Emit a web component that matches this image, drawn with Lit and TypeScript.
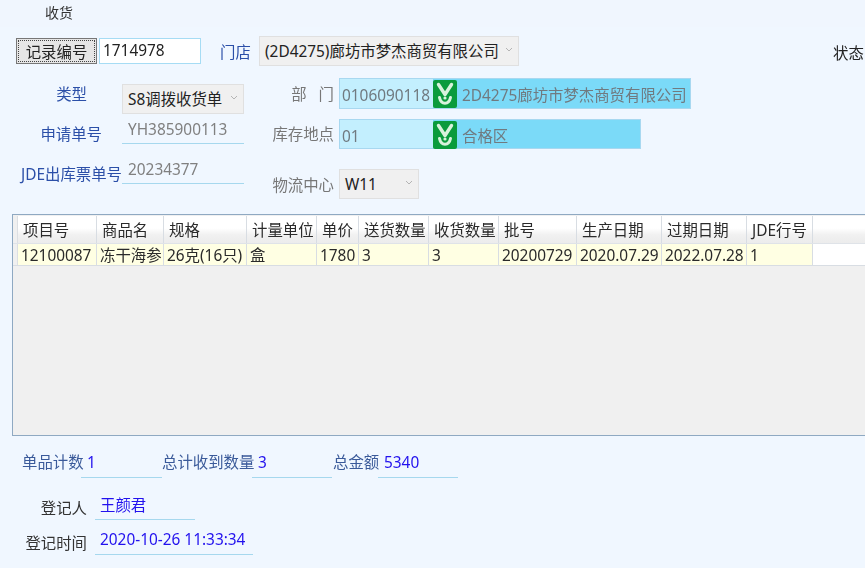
import { LitElement, html, css, svg } from "lit";
import { customElement } from "lit/decorators.js";

const columns = [
  { head: "项目号", cell: "12100087", w: 79 },
  { head: "商品名", cell: "冻干海参", w: 67 },
  { head: "规格", cell: "26克(16只)", w: 83 },
  { head: "计量单位", cell: "盒", w: 70 },
  { head: "单价", cell: "1780", w: 42 },
  { head: "送货数量", cell: "3", w: 70 },
  { head: "收货数量", cell: "3", w: 70 },
  { head: "批号", cell: "20200729", w: 78 },
  { head: "生产日期", cell: "2020.07.29", w: 85 },
  { head: "过期日期", cell: "2022.07.28", w: 85 },
  { head: "JDE行号", cell: "1", w: 66 },
];

const chevron = svg`<svg class="ico" viewBox="0 0 24 28" width="24" height="28">
  <rect x="0" y="0" width="24" height="28" rx="2" fill="#0a9b3c"/>
  <path d="M5.5 4.5 L12 14.5 L18.5 4.5" fill="none" stroke="#d8f2dc" stroke-width="3.4" stroke-linecap="round" stroke-linejoin="round"/>
  <path d="M6.5 17.5 C8 25 16 25 17.5 17.5" fill="none" stroke="#d8f2dc" stroke-width="3" stroke-linecap="round"/>
  <circle cx="12" cy="18" r="1.6" fill="#d8f2dc"/>
</svg>`;

const caret = svg`<svg class="caret" viewBox="0 0 8 5" width="8" height="5"><path d="M1 1 L4 4 L7 1" fill="none" stroke="#b4b4b4" stroke-width="1"/></svg>`;

@customElement("app-root")
export class AppRoot extends LitElement {
  static styles = css`
    :host {
      display: block;
      width: 865px;
      height: 568px;
      overflow: hidden;
      background: #f0f7ff;
      font-family: "Noto Sans", "Noto Sans CJK SC", sans-serif;
      font-size: 15.4px;
      line-height: 20px;
      color: #333;
    }
    .page { filter: blur(0.3px); }
    .title {
      height: 27px;
      padding: 3px 0 0 45px;
      box-sizing: border-box;
      font-size: 14px;
      background: #f0f6fe;
    }
    .top {
      display: flex;
      align-items: center;
      height: 30px;
      margin-top: 9px;
      padding-left: 16px;
    }
    .btn {
      width: 81px;
      height: 26px;
      flex: none;
      box-sizing: border-box;
      background: #e6e6e6;
      border: 1px solid #777;
      outline: 1px dotted #444;
      outline-offset: -3px;
      text-align: center;
      line-height: 27px;
      color: #222;
      white-space: nowrap;
    }
    .input {
      width: 102px;
      height: 26px;
      flex: none;
      margin-left: 2px;
      box-sizing: border-box;
      background: #fff;
      border: 1px solid #a6dcf4;
      padding: 2px 0 0 3px;
      line-height: 20px;
      color: #222;
    }
    .blue { color: #2b4fa8; }
    .gray { color: #777; }
    .store { margin-left: 19px; width: 39px; flex: none; white-space: nowrap; padding-top: 3px; }
    .select {
      position: relative;
      flex: none;
      box-sizing: border-box;
      height: 30px;
      background: #f0f0f0;
      border: 1px solid #e0e0e0;
      line-height: 30px;
      color: #222;
      padding-left: 5px;
      white-space: nowrap;
    }
    .caret { position: absolute; right: 5px; top: 10px; }
    .s-store { width: 260px; }
    .s-type { width: 122px; margin-left: 35px; }
    .s-wl { width: 80px; }
    .state { margin-left: 314px; color: #222; white-space: nowrap; padding-top: 5px; }
    .mid { display: flex; margin-top: 12px; height: 136px; }
    .left { width: 244px; padding-top: 6px; box-sizing: border-box; flex: none; }
    .lrow { display: flex; height: 30px; }
    .lrow.req { height: 40px; margin-top: 6px; }
    .lab {
      box-sizing: border-box;
      width: 122px;
      flex: none;
      white-space: nowrap;
      text-align: right;
    }
    .lab.kind { width: 87px; padding-top: 1px; }
    .lab.reqno { width: 102px; padding-top: 5px; }
    .lab.jde { padding-top: 5px; }
    .uval {
      width: 122px;
      height: 24px;
      flex: none;
      box-sizing: border-box;
      border-bottom: 1px solid #a6d8ee;
      padding-left: 6px;
      line-height: 20px;
      color: #808080;
    }
    .uval.reqno { margin-left: 20px; }
    .right { margin-left: 28px; }
    .rrow { display: flex; height: 31px; }
    .rrow.second { margin-top: 10px; height: 30px; }
    .rrow.third { margin-top: 20px; height: 30px; }
    .rlab { width: 62px; text-align: right; white-space: pre; padding-right: 5px; flex: none; line-height: 33px; }
    .second .rlab { line-height: 32px; }
    .third .rlab { line-height: 34px; }
    .fld {
      display: flex;
      height: 100%;
      box-sizing: border-box;
      border: 1px solid #a8d8f0;
      background: #7bdaf8;
      color: #707a80;
    }
    .fld.dept { width: 352px; }
    .fld.loc { width: 302px; }
    .code {
      background: #c3effe;
      width: 93px;
      flex: none;
      padding-left: 2px;
      box-sizing: border-box;
      line-height: 33px;
      white-space: nowrap;
      overflow: hidden;
    }
    .ico { display: block; flex: none; margin-top: 0.5px; }
    .nm { padding-left: 5px; line-height: 33px; white-space: nowrap; overflow: hidden; }
    .grid {
      margin: 0 0 0 12px;
      height: 222px;
      box-sizing: border-box;
      background: #f0f0f0;
      border: 1px solid #8fa9c2;
      border-right: none;
      padding-top: 1px;
      overflow: hidden;
    }
    .tr { display: flex; }
    .tr.h { height: 27px; background: linear-gradient(#ffffff 0, #ffffff 45%, #f1f1f1 70%, #ececec 100%); }
    .tr.d { height: 23px; box-sizing: border-box; background: #fff; border-top: 1px solid #dfe3e8; border-bottom: 1px solid #d8dde3; }
    .gut { width: 5px; flex: none; background: #f0f0f0; border-right: 1px solid #dcdfe3; box-sizing: border-box; }
    .th, .td { flex: none; box-sizing: border-box; border-right: 1px solid #d8dde3; white-space: nowrap; overflow: hidden; color: #2a2a2a; }
    .th { padding-left: 5px; line-height: 29px; }
    .td { padding-left: 3px; line-height: 24px; background: #ffffe3; }
    .sum { display: flex; margin: 17px 0 0 22px; height: 25px; }
    .sl { color: #3a5a9a; white-space: nowrap; line-height: 20px; flex: none; }
    .sl.a { width: 59px; }
    .sl.b { width: 90px; }
    .sl.c { width: 45px; margin-left: 1px; }
    .sv {
      flex: none;
      box-sizing: border-box;
      border-bottom: 1px solid #a6d8ee;
      color: #2211ee;
      padding-left: 6px;
      height: 25px;
      line-height: 20px;
    }
    .sv.a { width: 81px; }
    .sv.b { width: 80px; }
    .person { margin-top: 14px; }
    .prow { display: flex; height: 35px; }
    .pl { width: 87px; flex: none; text-align: right; color: #333; padding-top: 7px; box-sizing: border-box; white-space: nowrap; }
    .pv {
      margin-left: 8px;
      flex: none;
      box-sizing: border-box;
      height: 28px;
      padding: 3px 0 0 5px;
      border-bottom: 1px solid #a6d8ee;
      color: #2211ee;
      white-space: nowrap;
    }
    .pv.who { width: 100px; padding-top: 4px; }
    .pv.when { width: 158px; }
  `;

  render() {
    return html`
      <div class="page">
      <div class="title">收货</div>
      <div class="top">
        <div class="btn">记录编号</div>
        <div class="input">1714978</div>
        <div class="store blue">门店</div>
        <div class="select s-store">(2D4275)廊坊市梦杰商贸有限公司${caret}</div>
        <div class="state">状态</div>
      </div>
      <div class="mid">
        <div class="left">
          <div class="lrow">
            <div class="lab kind blue">类型</div>
            <div class="select s-type">S8调拨收货单${caret}</div>
          </div>
          <div class="lrow req">
            <div class="lab reqno blue">申请单号</div>
            <div class="uval reqno">YH385900113</div>
          </div>
          <div class="lrow">
            <div class="lab jde blue">JDE出库票单号</div>
            <div class="uval">20234377</div>
          </div>
        </div>
        <div class="right">
          <div class="rrow">
            <div class="rlab gray">部   门</div>
            <div class="fld dept">
              <div class="code">0106090118</div>${chevron}<div class="nm">2D4275廊坊市梦杰商贸有限公司</div>
            </div>
          </div>
          <div class="rrow second">
            <div class="rlab gray">库存地点</div>
            <div class="fld loc">
              <div class="code">01</div>${chevron}<div class="nm">合格区</div>
            </div>
          </div>
          <div class="rrow third">
            <div class="rlab gray">物流中心</div>
            <div class="select s-wl">W11${caret}</div>
          </div>
        </div>
      </div>
      <div class="grid">
        <div class="tr h">
          <div class="gut"></div>
          ${columns.map((c) => html`<div class="th" style="width:${c.w}px">${c.head}</div>`)}
        </div>
        <div class="tr d">
          <div class="gut"></div>
          ${columns.map((c) => html`<div class="td" style="width:${c.w}px">${c.cell}</div>`)}
        </div>
      </div>
      <div class="sum">
        <div class="sl a">单品计数</div>
        <div class="sv a">1</div>
        <div class="sl b">总计收到数量</div>
        <div class="sv b">3</div>
        <div class="sl c">总金额</div>
        <div class="sv b">5340</div>
      </div>
      <div class="person">
        <div class="prow">
          <div class="pl">登记人</div>
          <div class="pv who">王颜君</div>
        </div>
        <div class="prow">
          <div class="pl">登记时间</div>
          <div class="pv when">2020-10-26 11:33:34</div>
        </div>
      </div>
      </div>
    `;
  }
}
